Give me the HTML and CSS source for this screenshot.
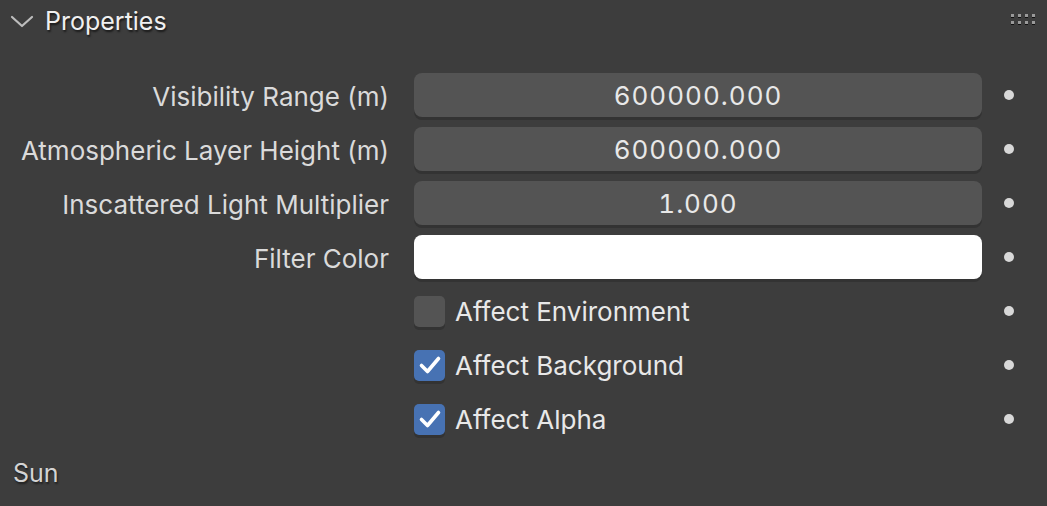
FILE: index.html
```html
<!DOCTYPE html>
<html lang="en">
<head>
    <meta charset="UTF-8">
    <title>Properties</title>
    <link rel="stylesheet" href="styles.css">
</head>
<body>
    <div class="panel">
        <div class="panel-header">
            <svg class="chevron" width="24" height="14" viewBox="0 0 24 14">
                <path d="M2 2 L12 11 L22 2" fill="none" stroke="#bdbdbd" stroke-width="2.2" stroke-linecap="round" stroke-linejoin="round"/>
            </svg>
            <span class="panel-title">Properties</span>
            <div class="grip">
                <i></i><i></i><i></i><i></i>
                <i></i><i></i><i></i><i></i>
            </div>
        </div>

        <div class="props">
            <div class="label">Visibility Range (m)</div>
            <div class="field">600000.000</div>
            <div class="dot"></div>

            <div class="label">Atmospheric Layer Height (m)</div>
            <div class="field">600000.000</div>
            <div class="dot"></div>

            <div class="label">Inscattered Light Multiplier</div>
            <div class="field">1.000</div>
            <div class="dot"></div>

            <div class="label">Filter Color</div>
            <div class="field color"></div>
            <div class="dot"></div>

            <div class="label"></div>
            <div class="check"><span class="box"></span>Affect Environment</div>
            <div class="dot"></div>

            <div class="label"></div>
            <div class="check"><span class="box on"><svg width="24" height="20" viewBox="0 0 24 20"><path d="M3.5 10.5 L9.5 16.5 L20.5 3.5" fill="none" stroke="#fff" stroke-width="3.6" stroke-linecap="round" stroke-linejoin="round"/></svg></span>Affect Background</div>
            <div class="dot"></div>

            <div class="label"></div>
            <div class="check"><span class="box on"><svg width="24" height="20" viewBox="0 0 24 20"><path d="M3.5 10.5 L9.5 16.5 L20.5 3.5" fill="none" stroke="#fff" stroke-width="3.6" stroke-linecap="round" stroke-linejoin="round"/></svg></span>Affect Alpha</div>
            <div class="dot"></div>
        </div>

        <div class="subpanel">Sun</div>
    </div>
</body>
</html>
```

FILE: styles.css
```css
body {
    margin: 0;
    background: #3d3d3d;
    font-family: Inter, "Noto Sans", sans-serif;
    color: #e5e5e5;
}

.panel {
    width: 1047px;
    height: 506px;
    overflow: hidden;
}

.panel-header {
    display: flex;
    align-items: center;
    height: 42px;
    padding-left: 10px;
    padding-right: 12px;
}

.chevron {
    margin-right: 11px;
    margin-top: 2px;
}

.panel-title {
    font-size: 25px;
    color: #f0f0f0;
    text-shadow: 1px 2px 2px rgba(0, 0, 0, 0.6);
}

.grip {
    margin-left: auto;
    display: grid;
    grid-template-columns: repeat(4, 3px);
    gap: 4px 4px;
    margin-top: -4px;
}

.grip i {
    width: 3px;
    height: 3px;
    background: #9a9a9a;
    box-shadow: 0 1px 0 #111;
}

.props {
    display: grid;
    grid-template-columns: 389px 593px 65px;
    row-gap: 10px;
    grid-auto-rows: 44px;
    margin-top: 31px;
}

.label {
    padding-top: 2px;
    text-align: right;
    font-size: 26px;
    line-height: 44px;
    color: #dadada;
    white-space: nowrap;
}

.field {
    margin-left: 25px;
    padding-top: 1px;
    background: #545454;
    border-radius: 8px;
    box-shadow: 0 3px 0 #333;
    text-align: center;
    font-size: 26px;
    line-height: 43px;
    letter-spacing: 1px;
    font-variant-numeric: tabular-nums;
    color: #e8e8e8;
}

.field.color {
    background: #ffffff;
}

.check {
    margin-left: 25px;
    display: flex;
    align-items: center;
    font-size: 26px;
    color: #e8e8e8;
}

.box {
    width: 31px;
    height: 31px;
    border-radius: 5px;
    background: #545454;
    box-shadow: 0 3px 0 #333;
    margin-right: 10px;
    display: flex;
    align-items: center;
    justify-content: center;
}

.box.on {
    background: #4772b3;
}

.dot {
    align-self: center;
    margin-left: 22px;
    width: 10px;
    height: 10px;
    border-radius: 50%;
    background: #d8d8d8;
}

.subpanel {
    margin-top: 17px;
    padding-left: 13px;
    font-size: 25px;
    color: #d4d4d4;
    text-shadow: 1px 2px 2px rgba(0, 0, 0, 0.5);
}
```
